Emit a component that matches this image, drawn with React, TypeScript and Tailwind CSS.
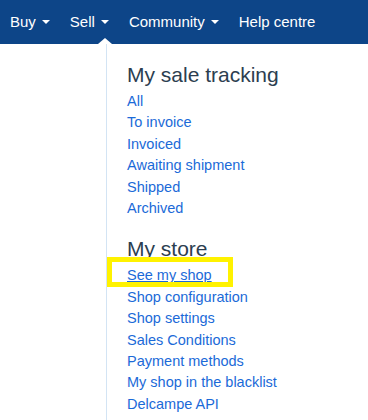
import React from 'react';

const navItems = [
  { label: 'Buy', caret: true },
  { label: 'Sell', caret: true },
  { label: 'Community', caret: true },
  { label: 'Help centre', caret: false },
];

const sections = [
  {
    title: 'My sale tracking',
    links: ['All', 'To invoice', 'Invoiced', 'Awaiting shipment', 'Shipped', 'Archived'],
  },
  {
    title: 'My store',
    links: [
      'See my shop',
      'Shop configuration',
      'Shop settings',
      'Sales Conditions',
      'Payment methods',
      'My shop in the blacklist',
      'Delcampe API',
    ],
  },
];

const Caret = () => (
  <span className="ml-[6px] inline-block h-0 w-0 border-x-[4px] border-t-[4px] border-x-transparent border-t-white" />
);

export default function App() {
  return (
    <div className="h-[420px] w-[368px] overflow-hidden bg-white font-['Liberation_Sans',Arial,sans-serif]">
      <nav className="flex h-[44px] items-center bg-[#0d4588] text-[15px] text-white">
        {navItems.map((item) => (
          <div key={item.label} className="flex items-center px-[10px]">
            <span>{item.label}</span>
            {item.caret && <Caret />}
          </div>
        ))}
      </nav>

      <div className="relative ml-[106px] h-[376px] border-l border-[#d3e4f4] pl-[20px] pt-[19px]">
        <span className="absolute -top-[6px] -left-[9px] h-0 w-0 border-x-[7px] border-b-[6px] border-x-transparent border-b-white" />
        {sections.map((section, i) => (
          <div key={section.title} className={i > 0 ? 'mt-[18px]' : ''}>
            <h3 className="mb-[4px] text-[21px] leading-[24px] text-[#2c3e50]">{section.title}</h3>
            <ul>
              {section.links.map((link) => (
                <li key={link} className="relative text-[14.5px] leading-[21.4px] text-[#1b6ad8]">
                  {link === 'See my shop' ? (
                    <>
                      <a href="#" className="underline">{link}</a>
                      <span className="pointer-events-none absolute -left-[20px] -top-[8px] h-[30px] w-[126px] border-[5px] border-[#fff200]" />
                    </>
                  ) : (
                    <a href="#">{link}</a>
                  )}
                </li>
              ))}
            </ul>
          </div>
        ))}
      </div>
    </div>
  );
}
